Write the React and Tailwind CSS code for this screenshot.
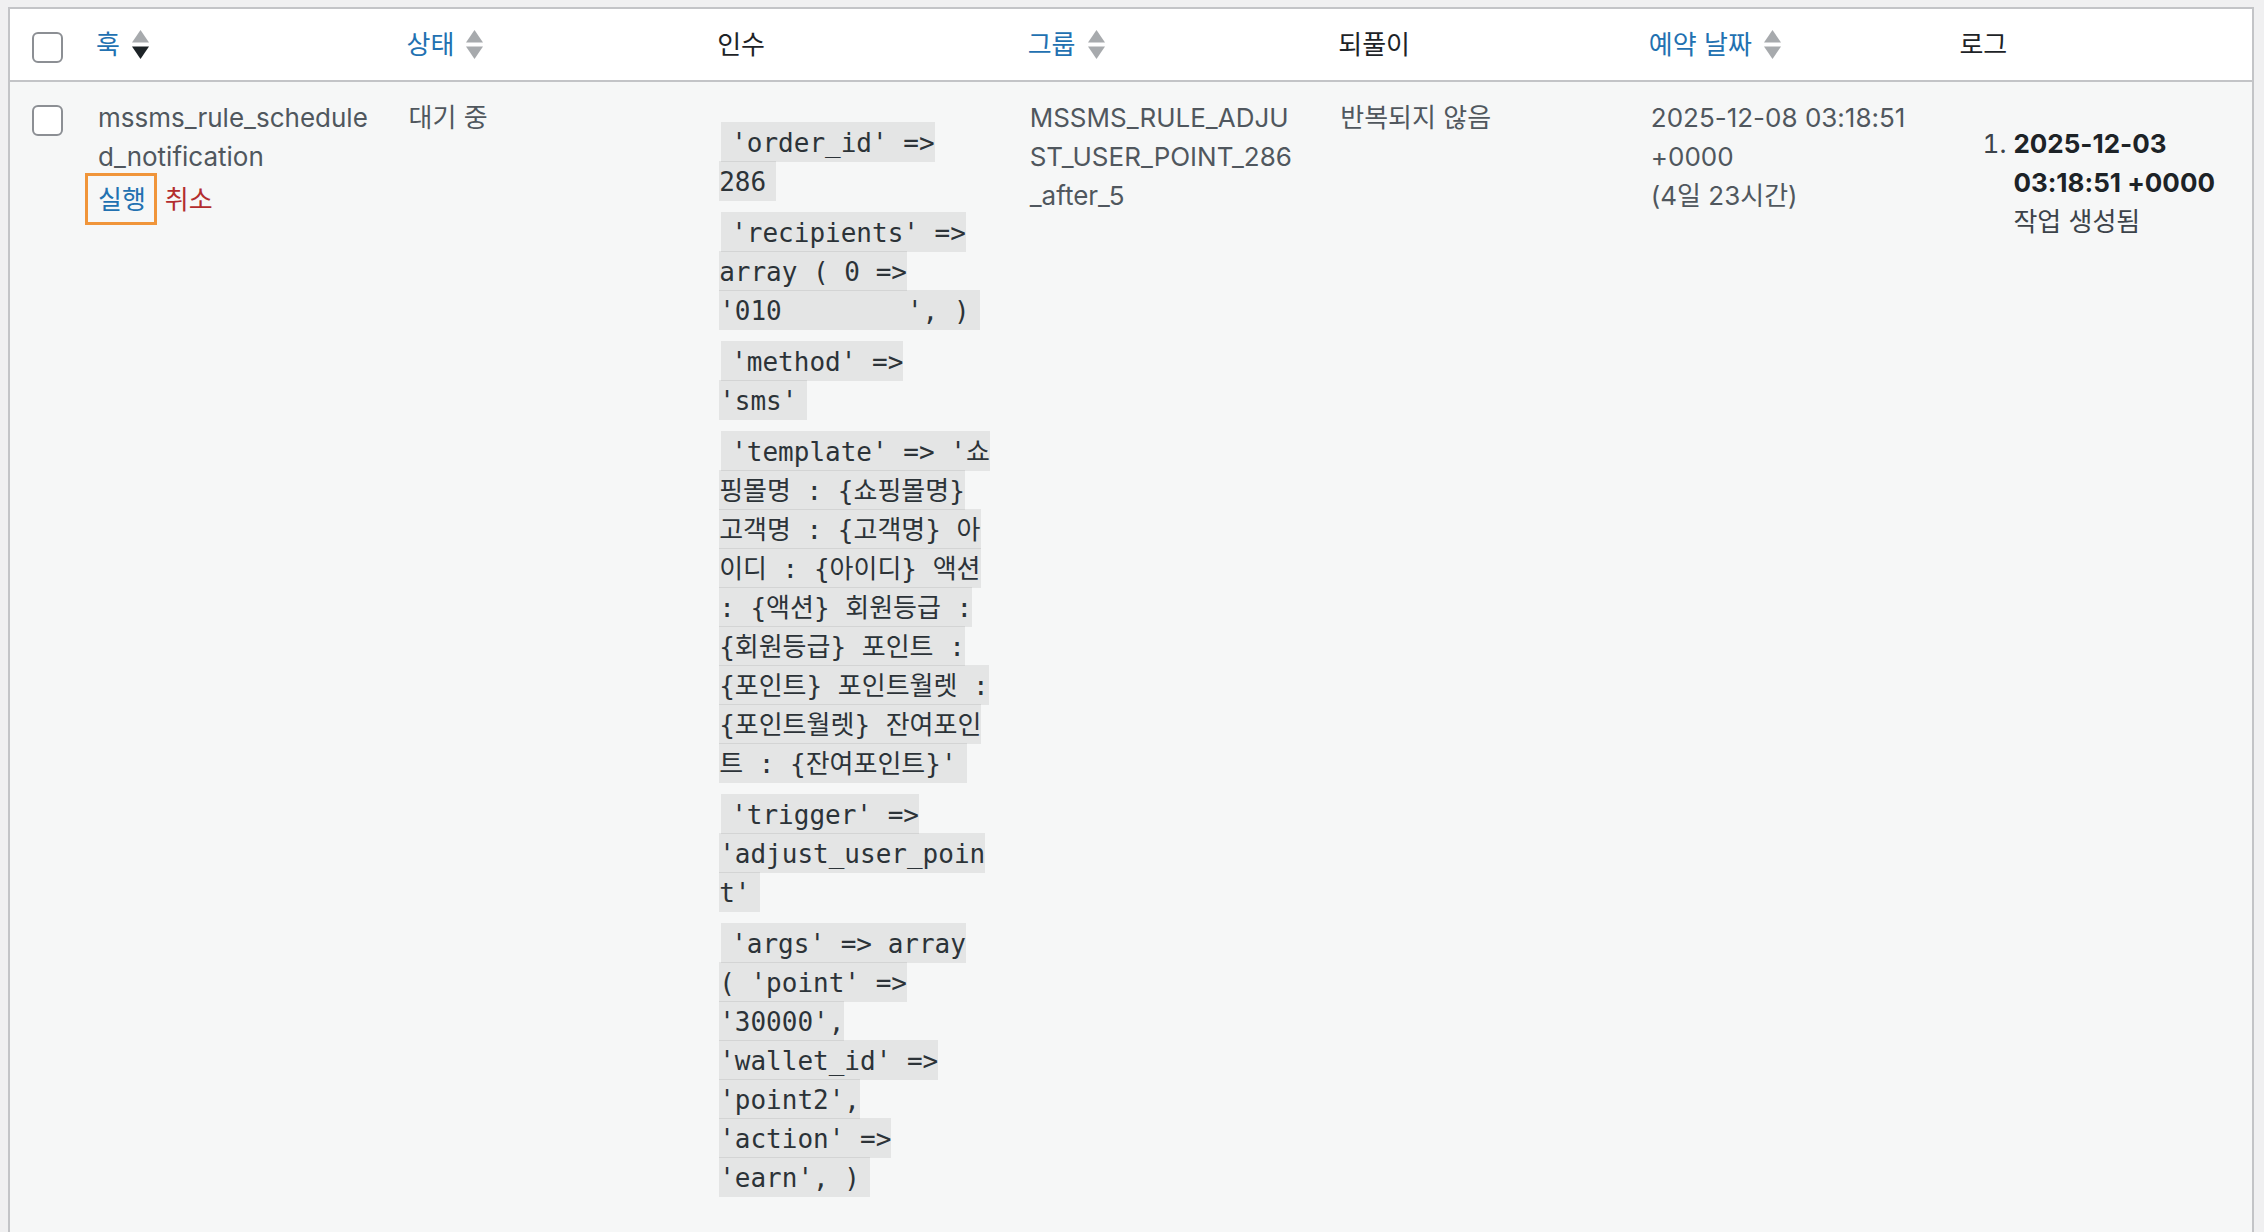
import React from "react";

const sans = "font-['Inter','Noto_Sans_CJK_KR',sans-serif]";
const mono = "font-['DejaVu_Sans_Mono','Noto_Sans_CJK_KR',monospace]";

const columns = [
  { id: "hook", label: "훅", sortable: true, active: true },
  { id: "status", label: "상태", sortable: true },
  { id: "args", label: "인수" },
  { id: "group", label: "그룹", sortable: true },
  { id: "recurrence", label: "되풀이" },
  { id: "schedule", label: "예약 날짜", sortable: true },
  { id: "log", label: "로그" },
];

const args = [
  "'order_id' =>\n286",
  "'recipients' =>\narray ( 0 =>\n'010        ', )",
  "'method' =>\n'sms'",
  "'template' => '쇼\n핑몰명 : {쇼핑몰명}\n고객명 : {고객명} 아\n이디 : {아이디} 액션\n: {액션} 회원등급 :\n{회원등급} 포인트 :\n{포인트} 포인트월렛 :\n{포인트월렛} 잔여포인\n트 : {잔여포인트}'",
  "'trigger' =>\n'adjust_user_poin\nt'",
  "'args' => array\n( 'point' =>\n'30000',\n'wallet_id' =>\n'point2',\n'action' =>\n'earn', )",
];

function SortIcon({ active }) {
  return (
    <svg width="17" height="29" viewBox="0 0 17 29" className="ml-3 shrink-0">
      <path d="M8.5 0 L17 12.5 L0 12.5 Z" fill="#a7aaad" />
      <path d="M0 16.5 L17 16.5 L8.5 29 Z" fill={active ? "#1d2327" : "#a7aaad"} />
    </svg>
  );
}

function Checkbox() {
  return <span className="block w-[31px] h-[31px] rounded-[6px] border-2 border-[#8c8f94] bg-white" />;
}

export default function App() {
  return (
    <div className={`min-h-screen bg-[#f0f0f1] pt-[7px] pl-[8px] pr-[10px] ${sans} text-[26px] leading-[39px] [font-feature-settings:'palt']`}>
      <table className="w-full table-fixed border-separate border-spacing-0 border-2 border-[#c3c4c7]">
        <colgroup>
          <col className="w-[68px]" />
          {columns.map((c) => (
            <col key={c.id} />
          ))}
        </colgroup>
        <thead>
          <tr className="bg-white">
            <th className="align-top pt-[23px] pl-[22px] pr-0 border-b-2 border-[#c3c4c7]">
              <Checkbox />
            </th>
            {columns.map((c) => (
              <th
                key={c.id}
                className="text-left font-normal align-middle pl-[18px] pr-5 py-4 border-b-2 border-[#c3c4c7]"
              >
                {c.sortable ? (
                  <span className="inline-flex items-center text-[#2271b1]">
                    {c.label}
                    <SortIcon active={c.active} />
                  </span>
                ) : (
                  <span className="text-[#1d2327]">{c.label}</span>
                )}
              </th>
            ))}
          </tr>
        </thead>
        <tbody>
          <tr className="bg-[#f6f7f7] text-[#50575e]">
            <td className="align-top pt-[23px] pl-[22px]">
              <Checkbox />
            </td>
            {/* Hook */}
            <td className="align-top px-5 py-4">
              <div>
                mssms_rule_schedule
                <br />
                d_notification
              </div>
              <div className="pt-1">
                <span className="relative text-[#2271b1]">
                  실행
                  <span className="absolute -left-[13px] -right-[11px] -top-[11px] -bottom-[10px] border-[3px] border-[#f0953a]" />
                </span>
                <span className="ml-[19px] text-[#b32d2e]">취소</span>
              </div>
            </td>
            {/* Status */}
            <td className="align-top px-5 py-4">대기 중</td>
            {/* Args */}
            <td className="align-top px-5 py-4">
              <ul className={`my-[26px] ${mono} text-[26px] leading-[39px]`}>
                {args.map((a, i) => (
                  <li key={i} className="mb-3 whitespace-pre">
                    <code
                      className={`${mono} text-[26px] leading-[39px] mx-[2px] pt-[6px] pb-[4px] px-[10px] bg-black/[0.07] text-[#2c3338]`}
                    >
                      {a}
                    </code>
                  </li>
                ))}
              </ul>
            </td>
            {/* Group */}
            <td className="align-top px-5 py-4">
              MSSMS_RULE_ADJU
              <br />
              ST_USER_POINT_286
              <br />
              _after_5
            </td>
            {/* Recurrence */}
            <td className="align-top px-5 py-4">반복되지 않음</td>
            {/* Schedule */}
            <td className="align-top px-5 py-4">
              2025-12-08 03:18:51
              <br />
              +0000
              <br />
              (4일 23시간)
            </td>
            {/* Log */}
            <td className="align-top px-5 py-4">
              <ol className="my-[26px] ml-[52px] list-decimal text-[#3c434a]">
                <li>
                  <strong className="font-bold text-[#1d2327] whitespace-nowrap">
                    2025-12-03
                    <br />
                    03:18:51 +0000
                  </strong>
                  <br />
                  작업 생성됨
                </li>
              </ol>
            </td>
          </tr>
        </tbody>
      </table>
    </div>
  );
}
